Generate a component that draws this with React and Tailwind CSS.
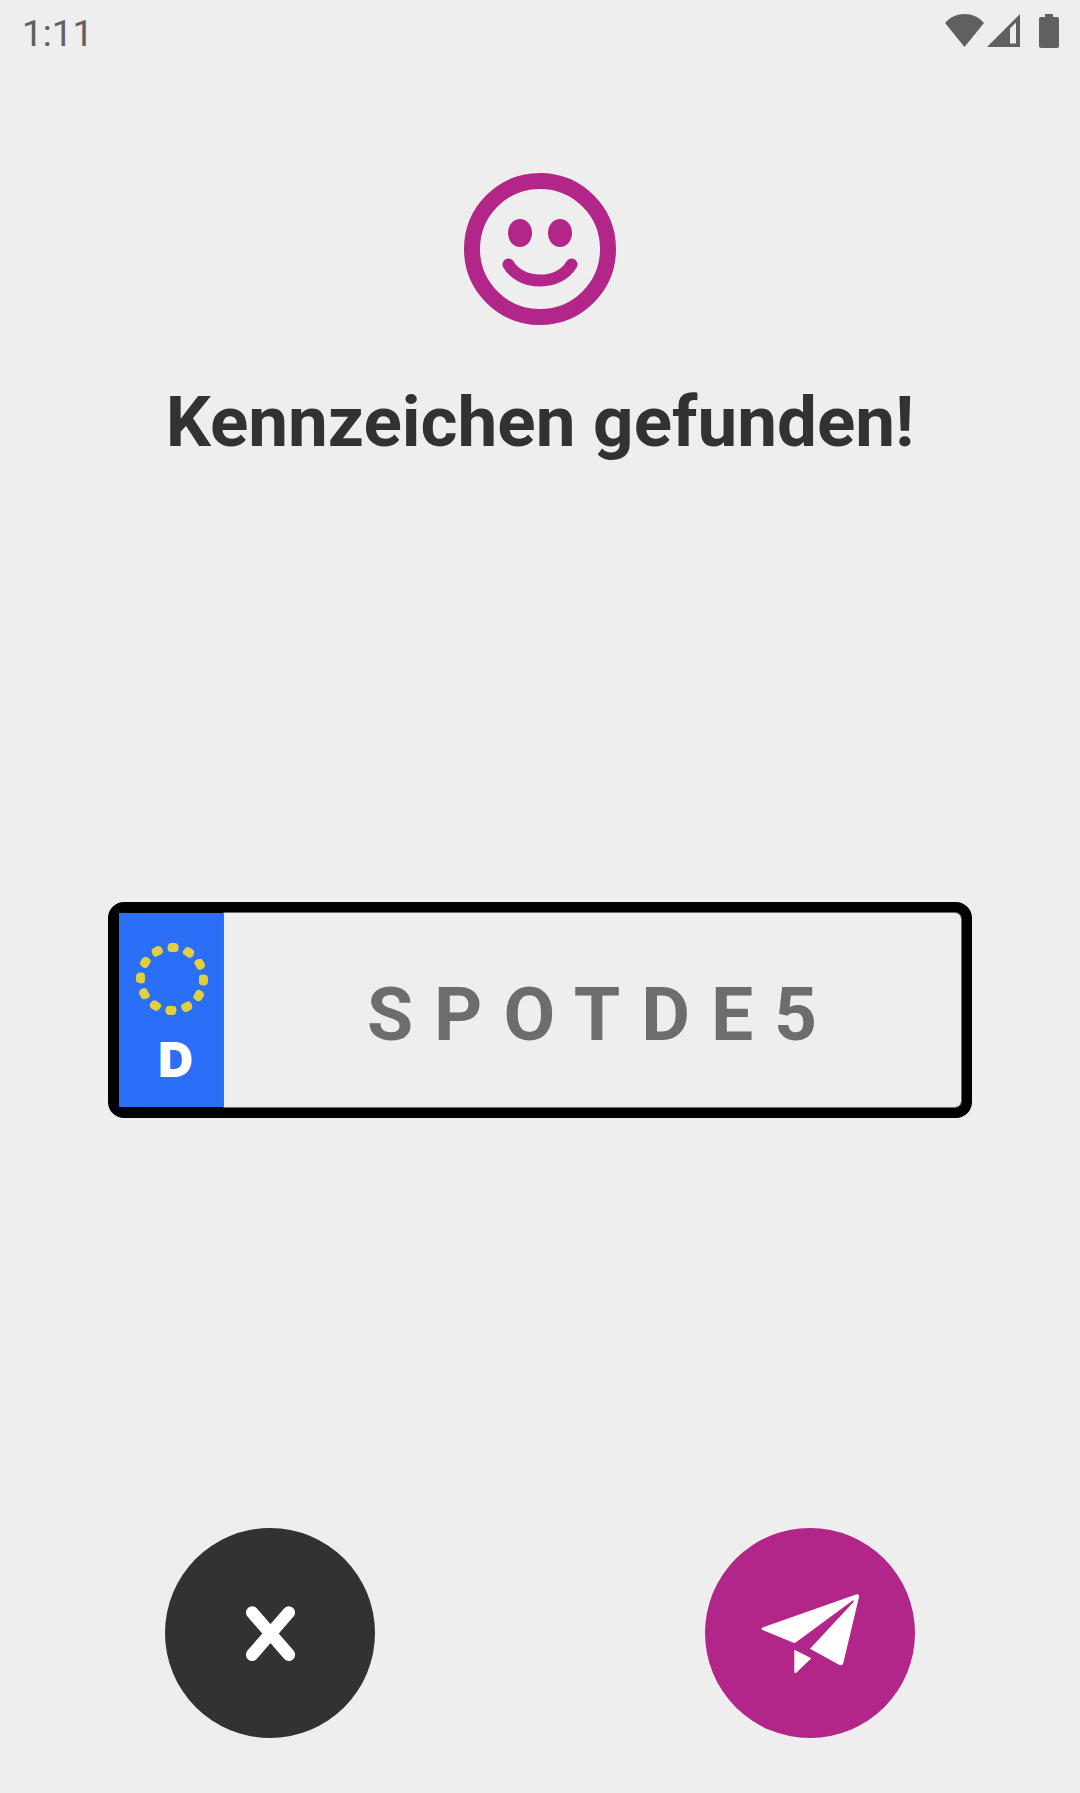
const STARS = [2, 32, 62, 92, 122, 152, 182, 212, 242, 272, 302, 332];

function StatusBar() {
  return (
    <header className="flex h-[62px] items-center justify-between pl-[22px] pr-[21px] text-[#606060]">
      <time className="pt-1 text-[37px] leading-none">1:11</time>
      <div className="flex items-start gap-[3px]">
        <svg width="39" height="33" viewBox="0 0 39 33" fill="currentColor" aria-label="WLAN">
          <path d="M0 9C10-3 29-3 39 9L19.5 33Z" />
        </svg>
        <svg width="33" height="33" viewBox="0 0 33 33" fill="currentColor" fillRule="evenodd" aria-label="Mobilfunk">
          <path d="M0 33L33 0V33ZM23 14.5V29.5H29V8.5Z" />
        </svg>
        <svg className="ml-4" width="20" height="34" viewBox="0 0 20 34" fill="currentColor" aria-label="Akku">
          <path d="M6 0H14V3H18Q20 3 20 5V32Q20 34 18 34H2Q0 34 0 32V5Q0 3 2 3H6Z" />
        </svg>
      </div>
    </header>
  );
}

function Smiley() {
  return (
    <svg width="152" height="152" viewBox="0 0 152 152" className="text-[#b12688]" aria-hidden="true">
      <circle cx="76" cy="76" r="68" fill="none" stroke="currentColor" strokeWidth="16" />
      <ellipse cx="56" cy="60" rx="12" ry="14" fill="currentColor" />
      <ellipse cx="96" cy="60" rx="12" ry="14" fill="currentColor" />
      <path
        d="M44.5 91.5C50 101 62 107.5 76 107.5C90 107.5 101.5 101.5 107.5 91.5"
        fill="none"
        stroke="currentColor"
        strokeWidth="12"
        strokeLinecap="round"
      />
    </svg>
  );
}

function Plate() {
  return (
    <div className="flex h-[216px] w-4/5 rounded-2xl border-[11px] border-black">
      <div className="flex w-[105px] shrink-0 flex-col items-center bg-[#2b6ff8] pt-[30px]">
        <svg width="72" height="72" viewBox="-36 -36 72 72" fill="#e2cf3d" aria-hidden="true">
          {STARS.map((angle) => (
            <path
              key={angle}
              d="M-2.5-36H2Q5.5-35.5 5.5-31.5Q5.5-27 2-27H-2.5Q-5.5-27-5.5-30.5Q-5.5-35.5-2.5-36Z"
              transform={`rotate(${angle})`}
            />
          ))}
        </svg>
        <span className="pl-2 pt-[21px] font-[Inter,sans-serif] text-5xl font-black leading-[48px] text-white">
          D
        </span>
      </div>
      <input
        aria-label="Kennzeichen"
        readOnly
        value="SPOTDE5"
        className="min-w-0 flex-1 rounded-r-md bg-transparent pb-0 pl-5 pt-2 text-center text-[75px] font-bold tracking-[21px] text-[#6d6d6d] outline-1 outline-[#6d6d6d]"
      />
    </div>
  );
}

export default function App() {
  return (
    <div className="flex min-h-screen flex-col bg-[#eeeeee] font-[Roboto,sans-serif]">
      <StatusBar />
      <main className="flex flex-1 flex-col items-center pb-[55px] pt-[111px]">
        <Smiley />
        <h1 className="mt-14 text-center text-[71px] font-bold leading-[81px] text-[#323232]">Kennzeichen gefunden!</h1>
        <div className="flex w-full flex-1 items-center justify-center pt-[30px]">
          <Plate />
        </div>
        <div className="grid w-full grid-cols-2 justify-items-center">
          <button type="button" aria-label="Abbrechen" className="size-[210px] rounded-full bg-[#323232]">
            <svg viewBox="0 0 210 210" stroke="#fff" strokeWidth="12.5" strokeLinecap="round">
              <path d="M87.2 84.5L123.8 126.7M123.8 84.5L87.2 126.7" />
            </svg>
          </button>
          <button type="button" aria-label="Senden" className="size-[210px] rounded-full bg-[#b12688]">
            <svg viewBox="0 0 210 210" fill="#fff">
              <path d="M57.5 99.5L151 66.4Q154.5 65.6 154 69L138.3 135Q137.5 138 134.5 137L105 120.7L149 73.5L148 72.3L91 114.2Q90 115.3 88.5 114.8L57.5 102Q55.5 100.7 57.5 99.5Z" />
              <path d="M89.3 121.7L106.3 130.3L91.5 144.5Q89.3 146 89.3 143.5Z" />
            </svg>
          </button>
        </div>
      </main>
    </div>
  );
}
